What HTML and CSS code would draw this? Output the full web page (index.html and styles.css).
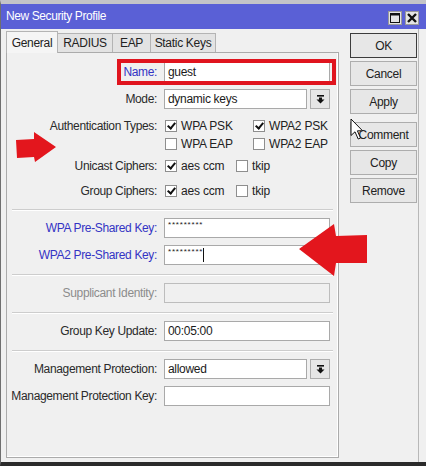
FILE: index.html
```html
<!DOCTYPE html>
<html lang="en">
<head>
    <meta charset="UTF-8">
    <title>New Security Profile</title>
    <link rel="stylesheet" href="styles.css">
</head>
<body>
<div class="window">
    <div class="titlebar">
        <span class="title">New Security Profile</span>
        <div class="caption-btns">
            <span class="cap-btn">
                <svg width="10" height="10" viewBox="0 0 10 10"><rect x="0.5" y="0.5" width="9" height="9" fill="none" stroke="#111" stroke-width="1"/><rect x="0" y="0" width="10" height="2.5" fill="#111"/></svg>
            </span>
            <span class="cap-btn">
                <svg width="10" height="10" viewBox="0 0 10 10"><path d="M1 1 L9 9 M9 1 L1 9" stroke="#111" stroke-width="2.4"/></svg>
            </span>
        </div>
    </div>

    <div class="client">
        <div class="tabs-area">
            <div class="tabs">
                <span class="tab active w-general">General</span>
                <span class="tab w-radius">RADIUS</span>
                <span class="tab w-eap">EAP</span>
                <span class="tab w-static">Static Keys</span>
            </div>

            <div class="panel">
                <div class="row name-row">
                    <label class="lbl blue">Name:</label>
                    <div class="input">guest</div>
                    <span class="highlight"></span>
                </div>
                <div class="row">
                    <label class="lbl">Mode:</label>
                    <div class="combo">
                        <div class="input">dynamic keys</div>
                        <span class="drop"><svg width="9" height="9" viewBox="0 0 9 9"><rect x="1" y="0" width="7" height="1.6" fill="#111"/><path d="M3 2.5 H6 V4.5 H8.5 L4.5 8.6 L0.5 4.5 H3 Z" fill="#111"/></svg></span>
                    </div>
                </div>
                <div class="row check first-check">
                    <label class="lbl">Authentication Types:</label>
                    <div class="checks auth">
                        <span class="cb-item"><span class="cb on"></span>WPA PSK</span>
                        <span class="cb-item"><span class="cb on"></span>WPA2 PSK</span>
                    </div>
                </div>
                <div class="row check tight">
                    <span></span>
                    <div class="checks auth">
                        <span class="cb-item"><span class="cb"></span>WPA EAP</span>
                        <span class="cb-item"><span class="cb"></span>WPA2 EAP</span>
                    </div>
                </div>
                <div class="row check after-auth">
                    <label class="lbl">Unicast Ciphers:</label>
                    <div class="checks cipher">
                        <span class="cb-item"><span class="cb on"></span>aes ccm</span>
                        <span class="cb-item"><span class="cb"></span>tkip</span>
                    </div>
                </div>
                <div class="row check">
                    <label class="lbl">Group Ciphers:</label>
                    <div class="checks cipher">
                        <span class="cb-item"><span class="cb on"></span>aes ccm</span>
                        <span class="cb-item"><span class="cb"></span>tkip</span>
                    </div>
                </div>

                <div class="sep"></div>

                <div class="row first">
                    <label class="lbl blue">WPA Pre-Shared Key:</label>
                    <div class="input secret">*********</div>
                </div>
                <div class="row">
                    <label class="lbl blue">WPA2 Pre-Shared Key:</label>
                    <div class="input secret">*********<span class="caret"></span></div>
                </div>

                <div class="sep"></div>

                <div class="row first">
                    <label class="lbl disabled">Supplicant Identity:</label>
                    <div class="input off"></div>
                </div>

                <div class="sep"></div>

                <div class="row first">
                    <label class="lbl">Group Key Update:</label>
                    <div class="input">00:05:00</div>
                </div>

                <div class="sep"></div>

                <div class="row first">
                    <label class="lbl">Management Protection:</label>
                    <div class="combo">
                        <div class="input">allowed</div>
                        <span class="drop"><svg width="9" height="9" viewBox="0 0 9 9"><rect x="1" y="0" width="7" height="1.6" fill="#111"/><path d="M3 2.5 H6 V4.5 H8.5 L4.5 8.6 L0.5 4.5 H3 Z" fill="#111"/></svg></span>
                    </div>
                </div>
                <div class="row">
                    <label class="lbl">Management Protection Key:</label>
                    <div class="input"></div>
                </div>
            </div>
        </div>

        <div class="actions">
            <button class="btn default">OK</button>
            <button class="btn">Cancel</button>
            <button class="btn">Apply</button>
            <button class="btn spaced">Comment</button>
            <button class="btn">Copy</button>
            <button class="btn">Remove</button>
        </div>
    </div>

    <!-- red callout arrows and the mouse pointer -->
    <svg class="arrow arrow-left" width="44" height="34" viewBox="0 0 44 34">
        <polygon points="1,9 19,8 19,1 41,16 20,31 19,26 2,27" fill="#e3161d"/>
    </svg>
    <svg class="arrow arrow-right" width="72" height="56" viewBox="0 0 72 56">
        <polygon points="1,27 36,2 38,14 69,13 69,41 38,41 36,54" fill="#e3161d"/>
    </svg>
    <svg class="pointer" width="16" height="23" viewBox="0 0 16 23">
        <path d="M1 1 L1 17.5 L5 13.8 L8.2 21 L10.5 20 L7.4 12.8 L12.6 12.8 Z" fill="#fff" stroke="#111" stroke-width="1" stroke-linejoin="round"/>
    </svg>
</div>
</body>
</html>
```

FILE: styles.css
```css
body {
    margin: 0;
    background: #f0f0f0;
    font-family: "Liberation Sans", Arial, sans-serif;
    font-size: 12px;
    color: #222;
}
.window {
    position: relative;
    width: 426px;
    height: 466px;
    box-sizing: border-box;
    border-top: 4px solid #c4c4c8;
    border-bottom: 4px solid #2b2b2b;
    border-left: 1px solid #6f6f6f;
    background: #f0f0f0;
    display: flex;
    flex-direction: column;
}
.titlebar {
    height: 25px;
    background: #5a60d6;
    display: flex;
    align-items: center;
    justify-content: space-between;
    padding: 0 7px 0 5px;
}
.title {
    color: #fff;
    font-size: 12px;
    letter-spacing: -0.4px;
    margin-top: -1px;
}
.caption-btns {
    display: flex;
    gap: 3px;
    padding-top: 2px;
}
.cap-btn {
    width: 14px;
    height: 14px;
    box-sizing: border-box;
    background: #e4e4e4;
    border: 1px solid #9a9a9a;
    display: flex;
    align-items: center;
    justify-content: center;
}
.client {
    flex: 1;
    display: flex;
    padding: 1px 0 4px 5px;
    width: 418px;
    box-sizing: border-box;
    border-right: 1px solid #b8b8b8;
}
.tabs-area {
    width: 333px;
    display: flex;
    flex-direction: column;
}
.tabs {
    display: flex;
    align-items: flex-end;
    height: 22px;
    position: relative;
    z-index: 1;
}
.tab {
    height: 19px;
    box-sizing: border-box;
    background: #e3e3e3;
    border: 1px solid #b4b4b4;
    border-bottom: none;
    margin-left: -1px;
    text-align: center;
    line-height: 18px;
    letter-spacing: -0.3px;
}
.tab.active {
    height: 22px;
    margin-left: 0;
    background: #f5f5f5;
    line-height: 22px;
    padding-bottom: 1px;
    margin-bottom: -1px;
}
.w-general { width: 52px; }
.w-radius { width: 56px; }
.w-eap { width: 39px; }
.w-static { width: 66px; }

.panel {
    flex: 1;
    border: 1px solid #ababab;
    box-shadow: inset -1px -1px 0 #fff;
    padding-top: 9px;
    display: flex;
    flex-direction: column;
}
.row {
    position: relative;
    display: grid;
    grid-template-columns: 150px 166px;
    column-gap: 7px;
    align-items: center;
    height: 20px;
    margin-top: 7px;
}
.name-row { margin-top: 0; }
.row.first { margin-top: 0; }
.row.check { height: 18px; }
.row.first-check { margin-top: 8px; }
.row.tight { margin-top: 0; }
.row.after-auth { margin-top: 4px; }

.lbl {
    text-align: right;
    white-space: nowrap;
    letter-spacing: -0.35px;
    color: #2a2a2a;
}
.lbl.blue { color: #3434c4; }
.lbl.disabled { color: #8c8c8c; }

.input {
    height: 20px;
    box-sizing: border-box;
    background: #fff;
    border: 1px solid #a9a9a9;
    padding-left: 3px;
    line-height: 18px;
    letter-spacing: -0.3px;
    color: #1a1a1a;
    position: relative;
}
.input.off { background: #f0f0f0; border-color: #bdbdbd; }
.input.secret {
    font-size: 8px;
    letter-spacing: 0.8px;
    line-height: 12px;
}
.caret {
    position: absolute;
    left: 38px;
    top: 2px;
    width: 1px;
    height: 14px;
    background: #111;
}
.combo {
    display: flex;
    gap: 3px;
}
.combo .input { flex: 1; }
.drop {
    width: 20px;
    height: 20px;
    box-sizing: border-box;
    background: #e6e6e6;
    border: 1px solid #adadad;
    display: flex;
    align-items: center;
    justify-content: center;
}
.highlight {
    position: absolute;
    left: 110px;
    top: -3px;
    width: 219px;
    height: 26px;
    box-sizing: border-box;
    border: 4px solid #e0141e;
    pointer-events: none;
}

.checks {
    display: grid;
    align-items: center;
    padding-left: 1px;
}
.checks.auth { grid-template-columns: 88px auto; }
.checks.cipher { grid-template-columns: 71px auto; }
.cb-item {
    display: flex;
    align-items: center;
    gap: 4px;
    letter-spacing: -0.2px;
    white-space: nowrap;
}
.cb {
    width: 12px;
    height: 12px;
    box-sizing: border-box;
    background: #fff;
    border: 1px solid #8e8e8e;
    position: relative;
}
.cb.on::after {
    content: "";
    position: absolute;
    left: 3px;
    top: 0px;
    width: 3px;
    height: 6px;
    border: solid #111;
    border-width: 0 2px 2px 0;
    transform: rotate(40deg);
}

.sep {
    margin: 9px 5px 7px;
    border-top: 1px solid #cdcdcd;
    border-bottom: 1px solid #fff;
}

.actions {
    width: 67px;
    margin-left: 11px;
    padding-top: 3px;
    display: flex;
    flex-direction: column;
    gap: 3px;
}
.btn {
    height: 25px;
    font-family: "Liberation Sans", Arial, sans-serif;
    font-size: 12px;
    letter-spacing: -0.3px;
    color: #222;
    background: #e7e7e7;
    border: 1px solid #adadad;
    padding: 0;
}
.btn.default { border: 1px solid #3c3c3c; }
.btn.spaced { margin-top: 5px; }

.arrow, .pointer {
    position: absolute;
}
.arrow-left { left: 14px; top: 127px; }
.arrow-right { left: 297px; top: 218px; }
.pointer { left: 349px; top: 114px; }
```
